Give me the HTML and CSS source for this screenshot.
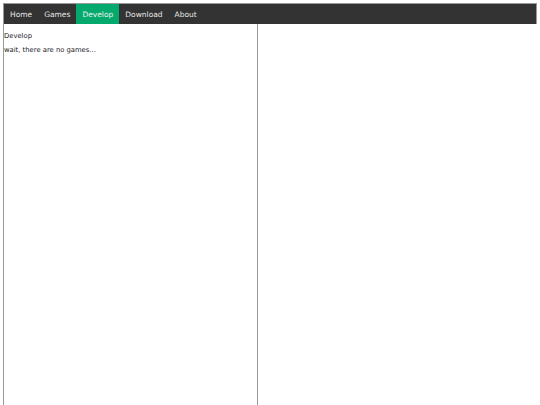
FILE: index.html
```html
<!DOCTYPE html>
<html>
<head>
<meta charset="utf-8">
<link rel="stylesheet" href="styles.css">
</head>
<body>
<nav class="topnav">
  <a href="#">Home</a>
  <a href="#">Games</a>
  <a href="#" class="active">Develop</a>
  <a href="#">Download</a>
  <a href="#">About</a>
</nav>
<main class="panel">
  <p class="title">Develop</p>
  <p>wait, there are no games...</p>
</main>
</body>
</html>
```

FILE: styles.css
```css
html, body {
  margin: 0;
  padding: 0;
  background: #fff;
}
body {
  padding: 3px 3px 0 3px;
  font-family: "DejaVu Sans", Verdana, sans-serif;
  font-size: 7px;
  color: #222;
  height: 405px;
  box-sizing: border-box;
  overflow: hidden;
  display: flex;
  flex-direction: column;
}
.topnav {
  display: flex;
  background: #333;
  border: 1px solid #999;
  border-bottom: none;
  height: 21px;
  box-sizing: border-box;
}
.topnav a {
  display: flex;
  align-items: center;
  padding: 0 6px;
  color: #e6e6e6;
  text-decoration: none;
  font-size: 7.5px;
}
.topnav a.active {
  background: #04aa6d;
  color: #f2f2f2;
}
.panel {
  width: 255px;
  box-sizing: border-box;
  border-left: 1px solid #999;
  border-right: 1px solid #999;
  flex: 1;
  padding: 0;
}
.panel p {
  margin: 6px 0 0 0;
  line-height: 8px;
  font-size: 6.8px;
}
.panel p.title {
  margin-top: 8px;
}
```
